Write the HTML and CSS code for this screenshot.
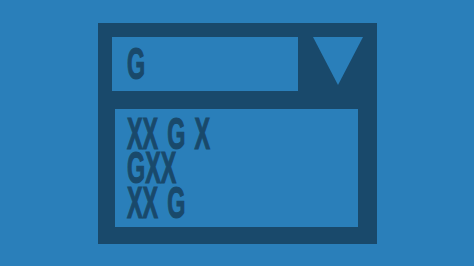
FILE: index.html
```html
<!DOCTYPE html>
<html>
<head>
<meta charset="utf-8">
<link rel="stylesheet" href="styles.css">
</head>
<body>
<div class="frame">
  <div class="header">
    <div class="input"><span class="txt">G</span></div>
    <svg class="arrow" width="50" height="48" viewBox="0 0 50 48"><polygon points="0,0 50,0 25,48" fill="#2a7fba"/></svg>
  </div>
  <div class="list">
    <span class="txt">XX G X</span>
    <span class="txt">GXX</span>
    <span class="txt">XX G</span>
  </div>
</div>
</body>
</html>
```
FILE: styles.css
```css
html, body {
  margin: 0;
  padding: 0;
}
body {
  width: 474px;
  height: 266px;
  background: #2a7fba;
  display: flex;
  align-items: center;
  justify-content: center;
  font-family: "Liberation Sans", Arial, sans-serif;
  font-weight: bold;
  color: #19496b;
  overflow: hidden;
}
.frame {
  width: 279px;
  height: 221px;
  box-sizing: border-box;
  background: #19496b;
  padding: 14px 14px 17px 14px;
  display: flex;
  flex-direction: column;
}
.header {
  display: flex;
  gap: 15px;
  height: 54px;
  align-items: flex-start;
}
.input {
  width: 186px;
  height: 54px;
  background: #2a7fba;
  box-sizing: border-box;
  padding-left: 15px;
  font-size: 44px;
  line-height: 54px;
  white-space: nowrap;
}
.arrow {
  display: block;
  flex: none;
}
.list {
  margin: 18px 5px 0 3px;
  flex: 1;
  background: #2a7fba;
  padding: 8px 0 0 12px;
  font-size: 44px;
  line-height: 34.5px;
  display: flex;
  flex-direction: column;
  align-items: flex-start;
}
.txt {
  display: block;
  white-space: pre;
  word-spacing: 5px;
  -webkit-text-stroke: 1.2px #19496b;
  transform: scaleX(0.53);
  transform-origin: left center;
}
```
